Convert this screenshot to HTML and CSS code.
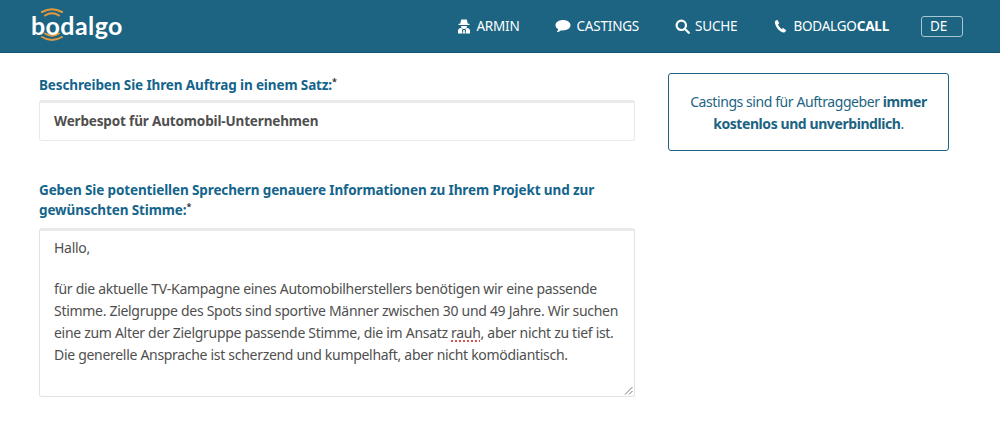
FILE: index.html
```html
<!DOCTYPE html>
<html lang="de">
<head>
    <meta charset="UTF-8">
    <meta name="viewport" content="width=device-width, initial-scale=1.0">
    <title>bodalgo Casting</title>
    <link rel="stylesheet" href="styles.css">
</head>
<body>
    <header class="topbar">
        <a class="logo">
            <svg class="logo-waves" width="36" height="36" viewBox="0 0 36 36" fill="none" stroke="#e39a3f" stroke-width="2" stroke-linecap="round">
                <path d="M8 4Q18-1.500 28 4"/>
                <path d="M11 7.500Q18 3 25 7.500"/>
                <path d="M11 25.500Q18 30 25 25.500"/>
                <path d="M8 29Q18 35 28 29"/>
            </svg>
            <span class="logo-text">bodalgo</span>
        </a>
        <nav class="nav">
            <a class="nav-item">
                <svg width="14" height="15" viewBox="0 0 14 15" fill="#fff"><path d="M4.200 0.500h5.600l1 4.300h1.700v1.200H1.500V4.800h1.700zM4 7h6a3 3 0 0 1-6 0zM1 14.500V12c0-1.700 1-2.700 3-3l1.500 1-.5 1.500.5 3zM13 14.500V12c0-1.700-1-2.700-3-3L8.500 10l.5 1.500-.5 3zM6.300 11h1.400l.3 3.500H6z"/></svg>
                <span>ARMIN</span>
            </a>
            <a class="nav-item">
                <svg width="16" height="14" viewBox="0 0 16 14" fill="#fff"><path d="M8 1c4 0 7.500 2.200 7.500 5.200S12 11.400 8 11.400c-.7 0-1.300 0-1.900-.2C5 12.300 3.500 13 1.800 13c.8-.8 1.300-1.800 1.400-2.900C1.500 9.200.5 7.800.5 6.200.5 3.200 4 1 8 1z"/></svg>
                <span>CASTINGS</span>
            </a>
            <a class="nav-item search">
                <svg width="15" height="15" viewBox="0 0 15 15" fill="none" stroke="#fff" stroke-width="2.200"><circle cx="6.300" cy="6.300" r="4.700"/><path d="M9.800 9.800l4 4" stroke-linecap="round"/></svg>
                <span>SUCHE</span>
            </a>
            <a class="nav-item call">
                <svg width="13" height="14" viewBox="0 0 13 14" fill="#fff"><path d="M3.300.8L1.500 1.800C.7 2.400.7 4 1.500 6c1 2.700 3.300 5.500 5.700 6.800 1.600.8 3 .8 3.800.1l1.300-1.500-3-2.500-1.500 1.100C6.300 9.200 4.600 7 4 5.200l1.300-1z"/></svg>
                <span>BODALGO<b>CALL</b></span>
            </a>
            <div class="lang">DE</div>
        </nav>
    </header>

    <main class="page">
        <section class="form-col">
            <label class="field-label">Beschreiben Sie Ihren Auftrag in einem Satz:<sup>*</sup></label>
            <div class="input-box">Werbespot für Automobil-Unternehmen</div>

            <label class="field-label second">Geben Sie potentiellen Sprechern genauere Informationen zu Ihrem Projekt und zur gewünschten Stimme:<sup>*</sup></label>
            <div class="textarea-box">
                <p>Hallo,</p>
                <p class="gap">für die aktuelle TV-Kampagne eines Automobilherstellers benötigen wir eine passende</p>
                <p>Stimme. Zielgruppe des Spots sind sportive Männer zwischen 30 und 49 Jahre. Wir suchen</p>
                <p>eine zum Alter der Zielgruppe passende Stimme, die im Ansatz <span class="spell">rauh</span>, aber nicht zu tief ist.</p>
                <p>Die generelle Ansprache ist scherzend und kumpelhaft, aber nicht komödiantisch.</p>
                <svg class="grip" width="9" height="9" viewBox="0 0 9 9" stroke="#777" stroke-width="1"><path d="M1 8.500L8.500 1M5 8.500L8.500 5"/></svg>
            </div>
        </section>
        <aside class="note">
            Castings sind für Auftraggeber <b>immer kostenlos und unverbindlich</b>.
        </aside>
    </main>
</body>
</html>
```

FILE: styles.css
```css
body {
    margin: 0;
    background: #fff;
    font-family: "Noto Sans", "Open Sans", sans-serif;
    height: 426px;
    overflow: hidden;
}

.topbar {
    height: 52px;
    background: #1c6482;
    border-bottom: 1px solid #175672;
    display: flex;
    justify-content: space-between;
    align-items: center;
    padding: 0 37px 0 32px;
}

.logo {
    position: relative;
    display: block;
    height: 36px;
    width: 90px;
}

.logo-waves {
    position: absolute;
    left: 2px;
    top: 0;
}

.logo-text {
    position: absolute;
    left: -1px;
    top: 1px;
    color: #fff;
    font-family: "Lato", sans-serif;
    font-size: 25px;
    line-height: 32px;
    font-weight: 700;
    letter-spacing: 0.4px;
}

.nav {
    display: flex;
    align-items: center;
    color: #fff;
    font-size: 13.500px;
}

.nav-item {
    display: flex;
    align-items: center;
    gap: 5px;
    margin-right: 36px;
    letter-spacing: -0.2px;
}

.nav-item svg {
    flex: none;
}

.nav-item.search {
    margin-right: 37px;
}

.nav-item.call {
    gap: 6px;
    margin-right: 32px;
}

.lang {
    width: 42px;
    height: 21px;
    box-sizing: border-box;
    border: 1px solid #a9c6d3;
    border-radius: 3px;
    padding-left: 8px;
    line-height: 19px;
}

.page {
    display: flex;
    align-items: flex-start;
    gap: 33px;
    padding: 20px 51px 0 39px;
}

.form-col {
    width: 596px;
}

.field-label {
    display: block;
    color: #14648c;
    font-size: 13.500px;
    line-height: 24px;
    font-weight: 700;
    letter-spacing: -0.12px;
}

.field-label sup {
    font-size: 9px;
    line-height: 0;
    color: #333;
}

.field-label.second {
    margin-top: 39px;
    line-height: 20px;
}

.input-box {
    margin-top: 3px;
    height: 41px;
    box-sizing: border-box;
    border: 1px solid #e9e9e9;
    border-top: 3px solid #eaeaea;
    border-radius: 3px;
    padding: 0 14px;
    line-height: 37px;
    font-size: 13.500px;
    font-weight: 700;
    color: #4f4f4f;
    letter-spacing: -0.15px;
}

.textarea-box {
    position: relative;
    margin-top: 8px;
    height: 169px;
    box-sizing: border-box;
    border: 1px solid #e2e2e2;
    border-top: 3px solid #e9e9e9;
    border-radius: 3px;
    padding: 6px 14px;
    font-size: 14px;
    line-height: 22px;
    color: #4f4f4f;
    letter-spacing: -0.3px;
}

.textarea-box p {
    margin: 0;
    white-space: nowrap;
}

.textarea-box .gap {
    margin-top: 19px;
}

.spell {
    text-decoration: underline dotted #d9534f 2px;
    text-underline-offset: 2px;
}

.grip {
    position: absolute;
    right: 1px;
    bottom: 1px;
}

.note {
    width: 281px;
    height: 78px;
    box-sizing: border-box;
    border: 1px solid #1c6482;
    border-radius: 3px;
    padding: 17px 20px;
    text-align: center;
    color: #1c6482;
    font-size: 14px;
    line-height: 22px;
    letter-spacing: -0.42px;
}
```
